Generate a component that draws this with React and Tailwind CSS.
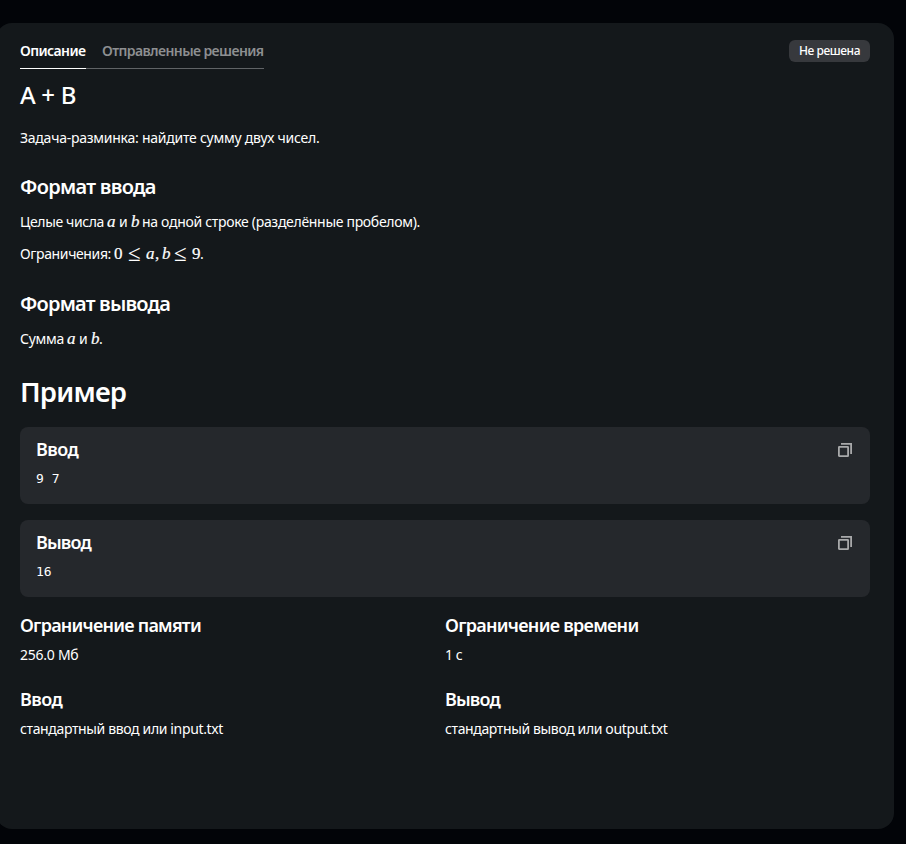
function CopyIcon() {
  return (
    <svg width="14" height="14" viewBox="0 0 14 14" fill="none" stroke="#a8a9aa" aria-hidden="true">
      <rect x="0.9" y="3.9" width="9.2" height="9.2" rx="0.4" strokeWidth="1.8" />
      <path d="M3 0.9H13.1V11" strokeWidth="1.8" />
    </svg>
  );
}

function Italic({ children, className }) {
  return (
    <i
      className={`inline-block font-['Liberation_Serif',serif] text-[17px] leading-none [-webkit-text-stroke:0.2px_white] ${className}`}
    >
      {children}
    </i>
  );
}

function Roman({ children, className }) {
  return (
    <span
      className={`inline-block font-['Liberation_Serif',serif] text-[17px] leading-none [-webkit-text-stroke:0.2px_white] ${className}`}
    >
      {children}
    </span>
  );
}

function LessOrEqual({ className }) {
  return (
    <span className={`relative top-[2px] inline-block font-['Liberation_Serif',serif] text-[23px] leading-[14px] ${className}`}>
      ≤
    </span>
  );
}

function Sample({ title, titleClass, children }) {
  return (
    <section className="flex h-[77px] items-start justify-between rounded-lg bg-[#25282c] pl-4 pr-[18px]">
      <div className="pt-[10px]">
        <h3 className={`text-lg leading-6 font-semibold ${titleClass}`}>{title}</h3>
        <pre className="mt-2 font-['DejaVu_Sans_Mono',monospace] text-[13px] leading-5">{children}</pre>
      </div>
      <button type="button" aria-label="Копировать" className="pt-4">
        <CopyIcon />
      </button>
    </section>
  );
}

function Limit({ title, titleClass, value, valueClass }) {
  return (
    <div>
      <h3 className={`text-lg leading-6 font-semibold ${titleClass}`}>{title}</h3>
      <p className={`mt-2 ${valueClass}`}>{value}</p>
    </div>
  );
}

const limits = [
  { title: "Ограничение памяти", titleClass: "tracking-[-0.76px]", value: "256.0 Мб", valueClass: "tracking-[-0.25px]" },
  { title: "Ограничение времени", titleClass: "tracking-[-0.72px]", value: "1 с", valueClass: "tracking-[-0.4px]" },
  { title: "Ввод", titleClass: "tracking-[-0.55px]", value: "стандартный ввод или input.txt", valueClass: "tracking-[-0.357px]" },
  { title: "Вывод", titleClass: "tracking-[-0.85px]", value: "стандартный вывод или output.txt", valueClass: "tracking-[-0.37px]" },
];

export default function App() {
  return (
    <div className="h-[844px] overflow-hidden bg-[#020408] pt-[23px] font-['Noto_Sans',sans-serif] text-sm leading-5 whitespace-nowrap text-white">
      <main className="-ml-1 h-[806px] w-[898px] rounded-2xl bg-[#14181b] px-6 pt-[17px]">
        <header className="flex h-[29px] items-start justify-between">
          <nav className="flex h-[29px] text-sm leading-[22px] font-semibold">
            <div className="w-[66px] border-b border-white tracking-[-0.6px]">Описание</div>
            <div className="w-[178px] border-b border-[#606366] pl-4 tracking-[-0.59px] text-[#8d8f91]">
              Отправленные решения
            </div>
          </nav>
          <span className="flex h-[22px] w-[81px] items-center justify-center rounded-md bg-[#37393d] text-xs font-medium tracking-[-0.42px]">
            Не решена
          </span>
        </header>

        <h1 className="mt-[10px] text-2xl leading-8 font-medium tracking-[-0.32px]">A + B</h1>
        <p className="mt-[17px] tracking-[-0.251px]">Задача-разминка: найдите сумму двух чисел.</p>

        <h2 className="mt-[27px] text-xl leading-6 font-semibold tracking-[-0.72px]">Формат ввода</h2>
        <p className="mt-[13px] flex h-5 items-baseline">
          <span className="w-[87px] tracking-[-0.375px]">Целые числа</span>
          <Italic className="w-3">a</Italic>
          <span className="w-[12px]">и</span>
          <Italic className="w-[11px]">b</Italic>
          <span className="tracking-[-0.306px]">на одной строке (разделённые пробелом).</span>
        </p>
        <p className="mt-3 flex h-5 items-baseline">
          <span className="w-[94px] tracking-[-0.371px]">Ограничения:</span>
          <Roman className="w-[14px]">0</Roman>
          <LessOrEqual className="w-[18px]" />
          <Italic className="w-[9px]">a</Italic>
          <Roman className="w-[7px]">,</Roman>
          <Italic className="w-[12px]">b</Italic>
          <LessOrEqual className="w-[18px]" />
          <Roman className="w-[8px]">9</Roman>
          <span>.</span>
        </p>

        <h2 className="mt-7 text-xl leading-6 font-semibold tracking-[-0.82px]">Формат вывода</h2>
        <p className="mt-[13px] flex h-5 items-baseline">
          <span className="w-[47px] tracking-[-0.275px]">Сумма</span>
          <Italic className="w-[12px]">a</Italic>
          <span className="w-[12px]">и</span>
          <Italic className="w-[8px]">b</Italic>
          <span>.</span>
        </p>

        <h2 className="mt-[25px] text-[27.5px] leading-9 font-semibold tracking-[-0.8px]">Пример</h2>
        <div className="mt-[17px] flex flex-col gap-4">
          <Sample title="Ввод" titleClass="tracking-[-0.55px]">9 7</Sample>
          <Sample title="Вывод" titleClass="tracking-[-0.85px]">16</Sample>
        </div>

        <div className="mt-4 grid grid-cols-2 gap-y-[22px]">
          {limits.map((limit) => (
            <Limit key={limit.title} {...limit} />
          ))}
        </div>
      </main>
    </div>
  );
}
